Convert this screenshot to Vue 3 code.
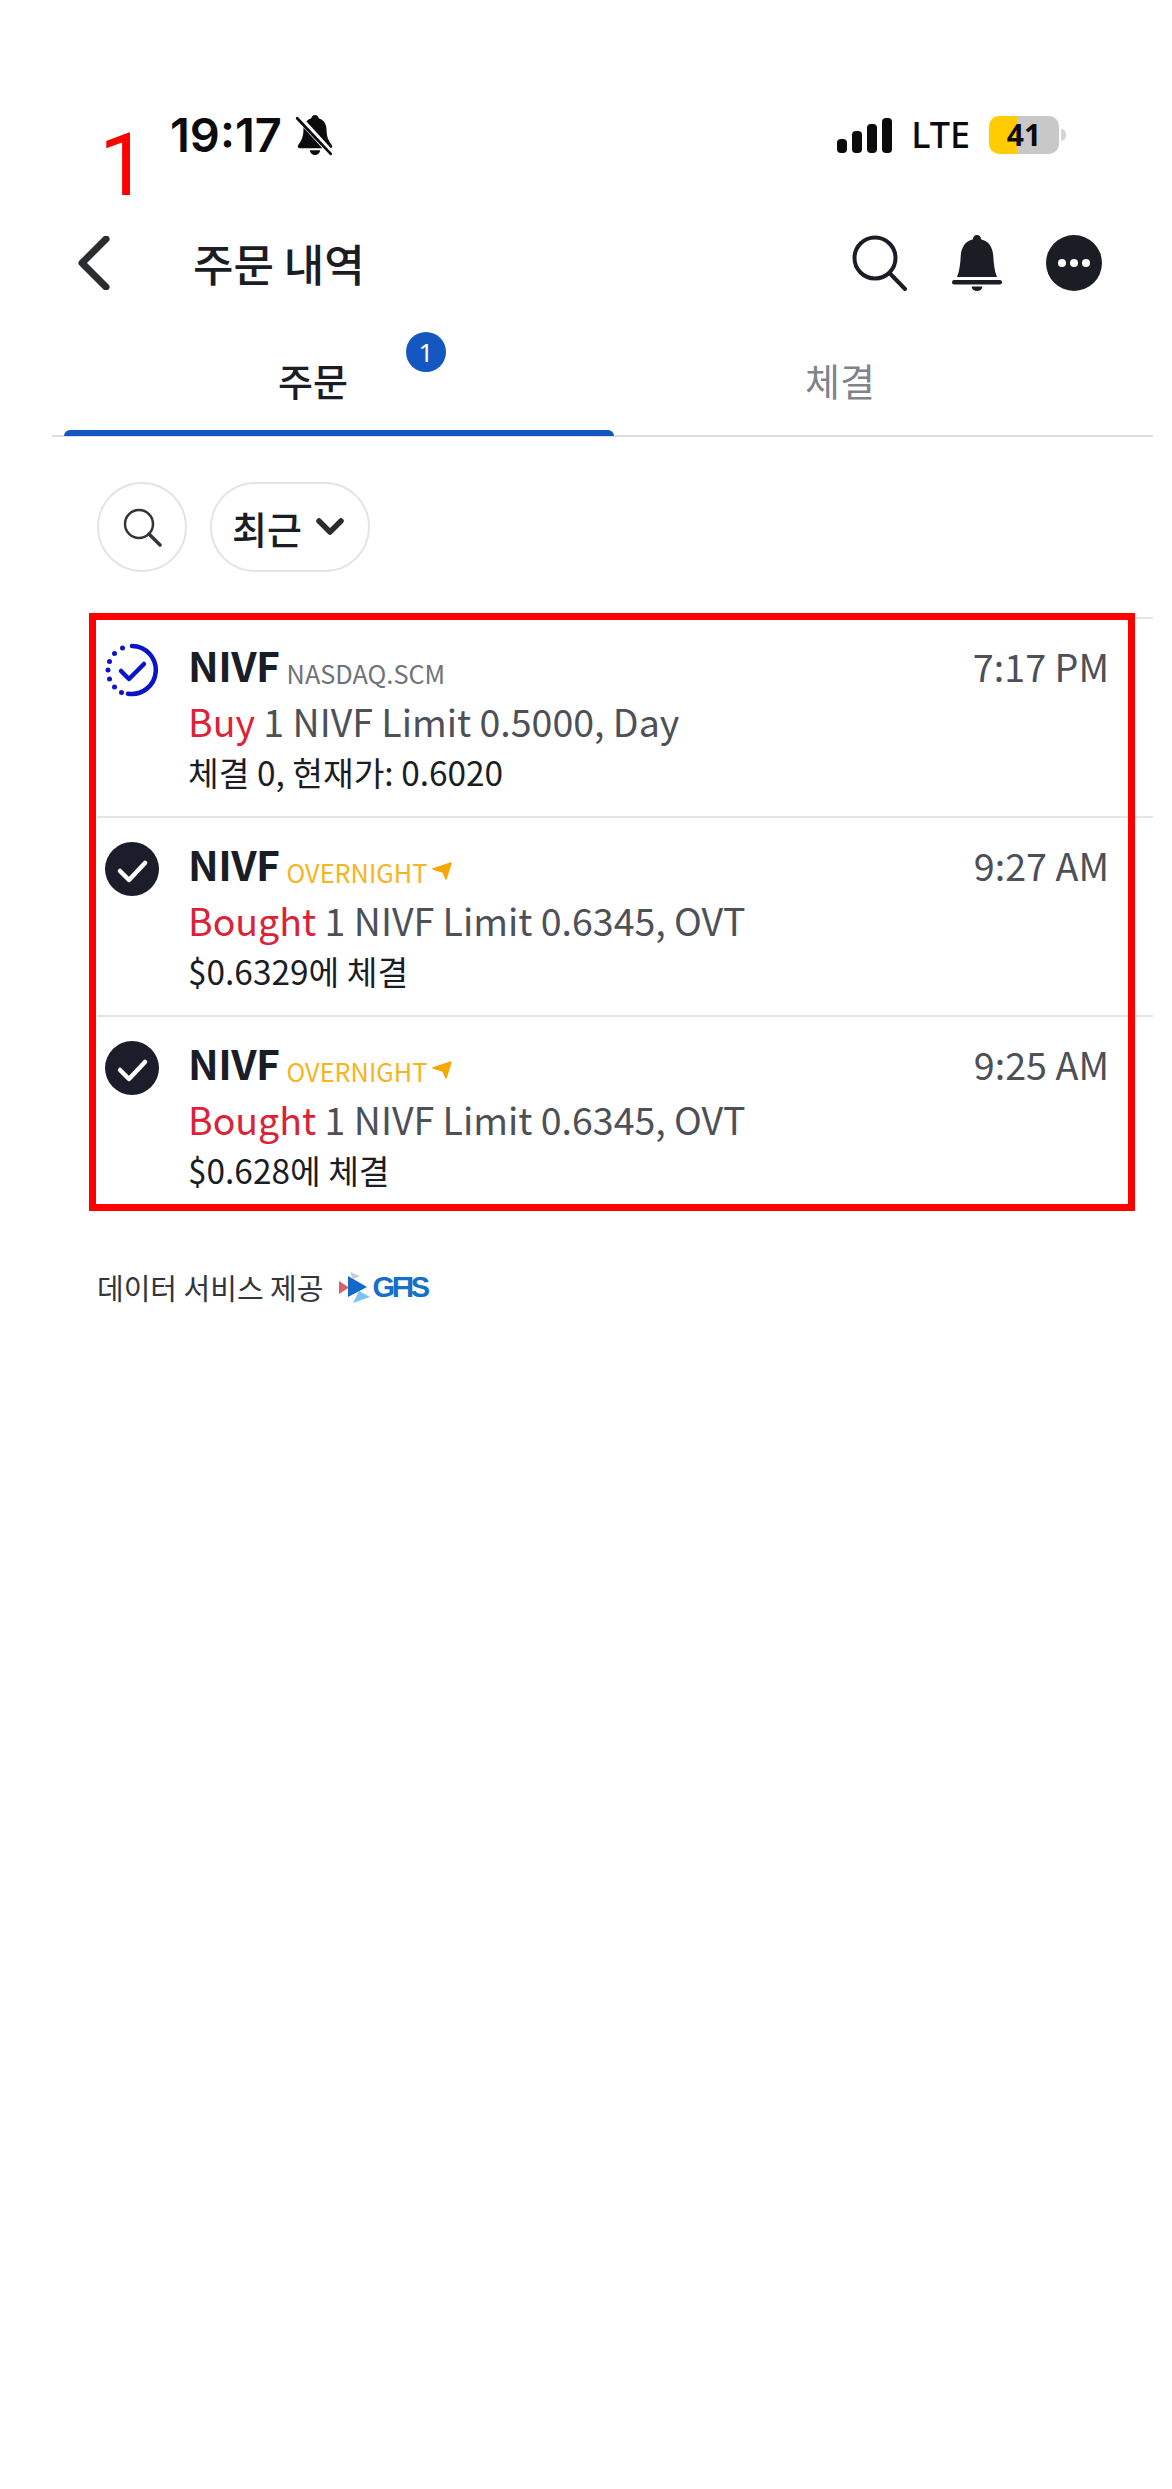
<template>
  <div class="screen">
    <span class="mark">1</span>

    <div class="status">
      <div class="status-left">
        <span class="clock">19:17</span>
        <svg class="muted" viewBox="0 0 38 40" width="40" height="42">
          <path d="M19 1c2 0 3.200 1.300 3.500 3 5 1.500 7.500 5.800 7.500 11 0 6 1.500 10 5 14.500 1 1.500.2 3-1.500 3H4.500C2.800 32.500 2 31 3 29.500 6.500 25 8 21 8 15c0-5.200 2.500-9.500 7.500-11C15.800 2.300 17 1 19 1zM14 34.500h10c-.4 2.800-2.500 4.500-5 4.500s-4.600-1.700-5-4.500z" fill="#0b0b0d" />
          <path d="M3 3l32 35" stroke="#fff" stroke-width="6" />
          <path d="M2 4l32 34" stroke="#0b0b0d" stroke-width="2.600" stroke-linecap="round" />
        </svg>
      </div>
      <div class="status-right">
        <div class="signal">
          <i v-for="h in bars" :key="h" :style="{ height: h + 'px' }"></i>
        </div>
        <span class="lte">LTE</span>
        <div class="battery">
          <span>41</span>
        </div>
        <i class="battery-cap"></i>
      </div>
    </div>

    <header class="nav">
      <svg class="back" viewBox="0 0 32 54" width="32" height="54" fill="none" stroke="#2b2c30" stroke-width="7" stroke-linecap="round" stroke-linejoin="round">
        <path d="M28 3L4 27l24 24" />
      </svg>
      <h1>주문 내역</h1>
      <div class="nav-icons">
        <svg viewBox="0 0 56 56" width="56" height="56" fill="none" stroke="#1b1d24" stroke-width="4" stroke-linecap="round">
          <circle cx="23" cy="23" r="20.500" />
          <path d="M37.500 38L53 54" />
        </svg>
        <svg viewBox="0 0 50 56" width="50" height="56" fill="#1b1d24">
          <path d="M25 0c2.500 0 4 1.800 4 4.300 8 1.900 11.800 8.300 12.300 17 .4 7.500 1.100 14.500 3.700 20.700H5c2.600-6.200 3.300-13.200 3.700-20.700.5-8.700 4.300-15.100 12.300-17C21 1.800 22.500 0 25 0z" />
          <rect x="0" y="45" width="50" height="4.500" rx="2.200" />
          <path d="M19.500 51.500h11c-.4 3-2.700 4.500-5.500 4.500s-5.100-1.500-5.500-4.500z" />
        </svg>
        <svg viewBox="0 0 56 56" width="56" height="56">
          <circle cx="28" cy="28" r="28" fill="#1b1d24" />
          <circle cx="16" cy="28" r="4" fill="#fff" />
          <circle cx="28" cy="28" r="4" fill="#fff" />
          <circle cx="40" cy="28" r="4" fill="#fff" />
        </svg>
      </div>
    </header>

    <nav class="tabs">
      <div class="tab active">
        <span>주문</span>
        <em class="badge">1</em>
      </div>
      <div class="tab second">
        <span>체결</span>
      </div>
    </nav>

    <div class="filters">
      <button class="filter-search">
        <svg viewBox="0 0 40 40" width="40" height="40" fill="none" stroke="#33353b" stroke-width="2.500" stroke-linecap="round">
          <circle cx="17" cy="17" r="14" />
          <path d="M27 27l11 11" stroke-width="3.500" />
        </svg>
      </button>
      <button class="chip">
        최근
        <svg viewBox="0 0 28 18" width="28" height="18" fill="none" stroke="#2b2c30" stroke-width="5.500" stroke-linecap="round" stroke-linejoin="round">
          <path d="M3 3l11 11L25 3" />
        </svg>
      </button>
    </div>

    <div class="orders">
      <div class="highlight"></div>
      <div v-for="o in orders" :key="o.time" class="order">
        <svg v-if="o.pending" class="state" viewBox="0 0 54 54" width="54" height="54" fill="none">
          <path d="M27 3a24 24 0 1 1-4 47.700" stroke="#0a14c8" stroke-width="4.500" stroke-linecap="round" />
          <g fill="#0a14c8">
            <circle cx="17.500" cy="5" r="2.500" />
            <circle cx="9.500" cy="10.500" r="2.500" />
            <circle cx="4.500" cy="18.500" r="2.500" />
            <circle cx="3" cy="27" r="2.500" />
            <circle cx="4.500" cy="36" r="2.500" />
            <circle cx="9.500" cy="44" r="2.500" />
            <circle cx="16.500" cy="49.500" r="2.500" />
          </g>
          <path d="M16 28l8 8 15-15" stroke="#0a14c8" stroke-width="4.500" stroke-linecap="round" stroke-linejoin="round" />
        </svg>
        <svg v-else class="state" viewBox="0 0 54 54" width="54" height="54" fill="none">
          <circle cx="27" cy="27" r="27" fill="#1b1d2a" />
          <path d="M15 29l9 9 16-17" stroke="#fff" stroke-width="4.500" stroke-linecap="round" stroke-linejoin="round" />
        </svg>
        <div class="order-body">
          <div class="order-top">
            <span class="symbol">NIVF</span>
            <span class="market" :class="{ night: !o.pending }">{{ o.market }}</span>
            <svg v-if="!o.pending" class="arrow" viewBox="0 0 20 18" width="20" height="18">
              <path d="M1 7L19 1l-5 16-3-7z" fill="#f5a800" stroke="#f5a800" stroke-width="1.500" stroke-linejoin="round" />
            </svg>
            <span class="time">{{ o.time }}</span>
          </div>
          <div class="order-desc"><b>{{ o.side }}</b> {{ o.desc }}</div>
          <div class="order-fill">{{ o.fill }}</div>
        </div>
      </div>
    </div>

    <footer class="credit">
      <span>데이터 서비스 제공</span>
      <div class="gfis">
        <svg viewBox="0 0 32 32" width="32" height="32">
          <path d="M11 1l10 4-7 3z" fill="#c9cbcf" />
          <path d="M0 10l10 6.500L0 23z" fill="#d8616c" />
          <path d="M20 20l-6 12 17-6z" fill="#7cc3f3" />
          <path d="M9 5l19 11L9 26z" fill="#1269c7" />
        </svg>
        <span>GFIS</span>
      </div>
    </footer>
  </div>
</template>

<script setup>
const bars = [14, 22, 29, 35]

const orders = [
  {
    pending: true,
    market: 'NASDAQ.SCM',
    time: '7:17 PM',
    side: 'Buy',
    desc: '1 NIVF Limit 0.5000, Day',
    fill: '체결 0, 현재가: 0.6020'
  },
  {
    pending: false,
    market: 'OVERNIGHT',
    time: '9:27 AM',
    side: 'Bought',
    desc: '1 NIVF Limit 0.6345, OVT',
    fill: '$0.6329에 체결'
  },
  {
    pending: false,
    market: 'OVERNIGHT',
    time: '9:25 AM',
    side: 'Bought',
    desc: '1 NIVF Limit 0.6345, OVT',
    fill: '$0.628에 체결'
  }
]
</script>

<style scoped>
.screen {
  position: relative;
  width: 1172px;
  height: 2489px;
  background: #fff;
  overflow: hidden;
  font-family: "Noto Sans CJK KR", "Noto Sans", sans-serif;
  color: #1b1d24;
}

.mark {
  position: absolute;
  left: 99px;
  top: 115px;
  font: 400 87px/100px Roboto, sans-serif;
  color: #ff0000;
}

.status {
  display: flex;
  justify-content: space-between;
  align-items: center;
  height: 40px;
  padding: 115px 106px 0 170px;
}

.status-left {
  display: flex;
  align-items: center;
  gap: 13px;
}

.clock {
  font: 600 47px/40px Inter, sans-serif;
  color: #0b0b0d;
}

.status-right {
  display: flex;
  align-items: center;
}

.signal {
  display: flex;
  align-items: flex-end;
  gap: 5px;
  height: 35px;
  margin-right: 19px;
}

.signal i {
  display: block;
  width: 10px;
  background: #0b0b0d;
  border-radius: 4px;
}

.lte {
  font: 500 36px/40px "Noto Sans", sans-serif;
  color: #0b0b0d;
  margin-right: 19px;
}

.battery {
  width: 70px;
  height: 38px;
  border-radius: 10px;
  background: linear-gradient(90deg, #ffcc00 40%, #c8c8c8 40%);
  display: grid;
  place-items: center;
}

.battery span {
  font: 700 30px/38px "Noto Sans", sans-serif;
  color: #0b0b0d;
}

.battery-cap {
  display: block;
  width: 5px;
  height: 12px;
  margin-left: 2px;
  background: #d4d4d4;
  border-radius: 0 6px 6px 0;
}

.nav {
  display: flex;
  align-items: center;
  height: 56px;
  margin-top: 80px;
  padding: 0 70px 0 78px;
}

.nav h1 {
  margin: 0 0 0 83px;
  font-size: 44px;
  line-height: 56px;
  font-weight: 500;
}

.nav-icons {
  display: flex;
  align-items: center;
  gap: 44px;
  margin-left: auto;
}

.tabs {
  display: grid;
  grid-template-columns: 562px 1fr;
  height: 146px;
  margin: 0 19px 0 52px;
  border-bottom: 2px solid #dcdde0;
  box-sizing: border-box;
}

.tab {
  position: relative;
  padding: 64px 0 0 226px;
  font-size: 38px;
  line-height: 50px;
  color: #808389;
}

.tab.second {
  padding-left: 191px;
}

.tab.active {
  color: #1b1d24;
  font-weight: 500;
}

.tab.active::after {
  content: '';
  position: absolute;
  left: 12px;
  right: 0;
  bottom: -1px;
  height: 6px;
  background: #1557c0;
  border-radius: 6px 6px 0 0;
}

.badge {
  position: absolute;
  left: 354px;
  top: 41px;
  width: 40px;
  height: 40px;
  border-radius: 50%;
  background: #1557c0;
  color: #fff;
  font: 400 26px/40px "Noto Sans", sans-serif;
  text-align: center;
}

.filters {
  display: flex;
  gap: 23px;
  padding: 45px 0 0 97px;
}

.filter-search {
  width: 90px;
  height: 90px;
  display: grid;
  place-items: center;
  background: #fff;
  border: 2px solid #e3e4e6;
  border-radius: 50%;
  padding: 0;
}

.chip {
  display: flex;
  align-items: center;
  gap: 14px;
  height: 90px;
  padding: 0 24px 0 20px;
  background: #fff;
  border: 2px solid #e3e4e6;
  border-radius: 45px;
  font-family: inherit;
  font-size: 38px;
  font-weight: 500;
  color: #1b1d24;
}

.orders {
  position: relative;
  margin: 45px 19px 0 97px;
  border-top: 2px solid #e3e4e6;
}

.highlight {
  position: absolute;
  left: -8px;
  right: 18px;
  top: -6px;
  height: 584px;
  border: 7px solid #ff0000;
  pointer-events: none;
}

.order {
  display: flex;
  height: 178px;
  padding: 19px 0 0 8px;
  gap: 29px;
  border-bottom: 2px solid #e3e4e6;
}

.order:last-child {
  border-bottom: 0;
}

.state {
  margin-top: 5px;
}

.order-body {
  flex: 1;
  padding-right: 44px;
}

.order-top {
  display: flex;
  align-items: baseline;
  height: 48px;
}

.symbol {
  font-size: 41px;
  line-height: 48px;
  font-weight: 700;
  letter-spacing: -0.5px;
}

.market {
  margin-left: 7px;
  font-size: 25.300px;
  color: #6f7279;
  transform: translateY(2px);
}

.market.night {
  color: #f8b320;
}

.arrow {
  align-self: flex-end;
  margin: 0 0 5px 5px;
}

.time {
  margin-left: auto;
  font-size: 37.700px;
  color: #4d5057;
}

.order-desc {
  margin-top: 9px;
  font-size: 37.500px;
  line-height: 52px;
  color: #4d5057;
}

.order-desc b {
  font-weight: 400;
  color: #db2237;
}

.order-fill {
  margin-top: 3px;
  font-size: 33.400px;
  line-height: 44px;
  color: #1b1d24;
}

.credit {
  display: flex;
  align-items: center;
  gap: 16px;
  padding: 55px 0 0 97px;
  font-size: 29px;
  line-height: 36px;
  color: #33353b;
}

.gfis {
  display: flex;
  align-items: center;
  gap: 1px;
}

.gfis span {
  font: 700 29px/32px "Liberation Sans", sans-serif;
  letter-spacing: -3.300px;
  color: #1570c8;
}
</style>

<style>
html, body {
  margin: 0;
  background: #fff;
}
</style>
